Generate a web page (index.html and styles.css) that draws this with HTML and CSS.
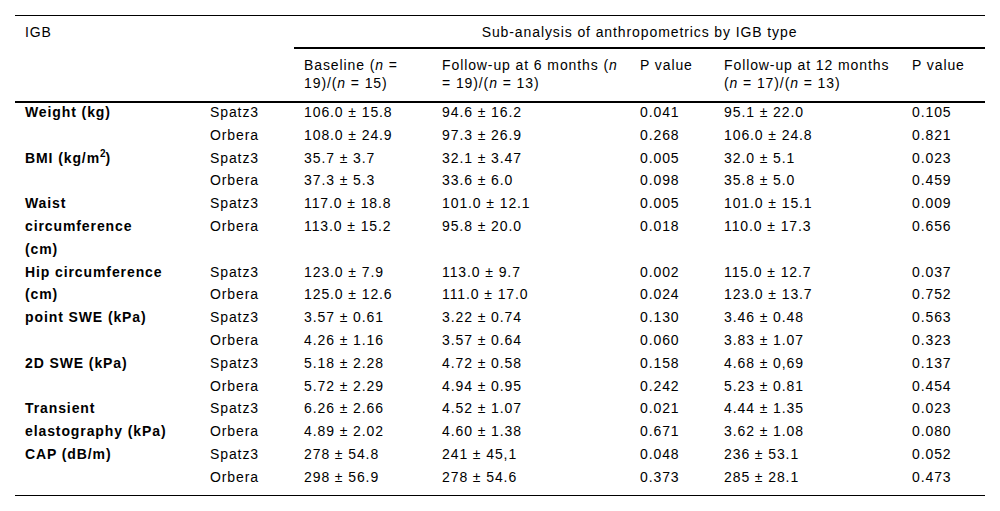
FILE: index.html
```html
<!DOCTYPE html>
<html lang="en">
<head>
<meta charset="utf-8">
<title>Sub-analysis of anthropometrics by IGB type</title>
<link rel="stylesheet" href="styles.css">
</head>
<body>
<table class="data">
  <colgroup>
    <col class="c-label">
    <col class="c-type">
    <col class="c-base">
    <col class="c-f6">
    <col class="c-p">
    <col class="c-f12">
    <col class="c-p2">
  </colgroup>
  <thead>
    <tr class="h1">
      <th colspan="2">IGB</th>
      <th colspan="5" class="sub">Sub-analysis of anthropometrics by IGB type</th>
    </tr>
    <tr class="h2">
      <th colspan="2"></th>
      <th>Baseline (<i>n</i> =<br>19)/(<i>n</i> = 15)</th>
      <th>Follow-up at 6 months (<i>n</i><br>= 19)/(<i>n</i> = 13)</th>
      <th>P value</th>
      <th>Follow-up at 12 months<br>(<i>n</i> = 17)/(<i>n</i> = 13)</th>
      <th>P value</th>
    </tr>
  </thead>
  <tbody>
    <tr><th rowspan="2">Weight (kg)</th><td>Spatz3</td><td>106.0 ± 15.8</td><td>94.6 ± 16.2</td><td>0.041</td><td>95.1 ± 22.0</td><td>0.105</td></tr>
    <tr><td>Orbera</td><td>108.0 ± 24.9</td><td>97.3 ± 26.9</td><td>0.268</td><td>106.0 ± 24.8</td><td>0.821</td></tr>
    <tr><th rowspan="2">BMI (kg/m<sup>2</sup>)</th><td>Spatz3</td><td>35.7 ± 3.7</td><td>32.1 ± 3.47</td><td>0.005</td><td>32.0 ± 5.1</td><td>0.023</td></tr>
    <tr><td>Orbera</td><td>37.3 ± 5.3</td><td>33.6 ± 6.0</td><td>0.098</td><td>35.8 ± 5.0</td><td>0.459</td></tr>
    <tr><th rowspan="3">Waist<br>circumference<br>(cm)</th><td>Spatz3</td><td>117.0 ± 18.8</td><td>101.0 ± 12.1</td><td>0.005</td><td>101.0 ± 15.1</td><td>0.009</td></tr>
    <tr><td>Orbera</td><td>113.0 ± 15.2</td><td>95.8 ± 20.0</td><td>0.018</td><td>110.0 ± 17.3</td><td>0.656</td></tr>
    <tr class="gap"><td></td><td></td><td></td><td></td><td></td><td></td></tr>
    <tr><th rowspan="2">Hip circumference<br>(cm)</th><td>Spatz3</td><td>123.0 ± 7.9</td><td>113.0 ± 9.7</td><td>0.002</td><td>115.0 ± 12.7</td><td>0.037</td></tr>
    <tr><td>Orbera</td><td>125.0 ± 12.6</td><td>111.0 ± 17.0</td><td>0.024</td><td>123.0 ± 13.7</td><td>0.752</td></tr>
    <tr><th rowspan="2">point SWE (kPa)</th><td>Spatz3</td><td>3.57 ± 0.61</td><td>3.22 ± 0.74</td><td>0.130</td><td>3.46 ± 0.48</td><td>0.563</td></tr>
    <tr><td>Orbera</td><td>4.26 ± 1.16</td><td>3.57 ± 0.64</td><td>0.060</td><td>3.83 ± 1.07</td><td>0.323</td></tr>
    <tr><th rowspan="2">2D SWE (kPa)</th><td>Spatz3</td><td>5.18 ± 2.28</td><td>4.72 ± 0.58</td><td>0.158</td><td>4.68 ± 0,69</td><td>0.137</td></tr>
    <tr><td>Orbera</td><td>5.72 ± 2.29</td><td>4.94 ± 0.95</td><td>0.242</td><td>5.23 ± 0.81</td><td>0.454</td></tr>
    <tr><th rowspan="2">Transient<br>elastography (kPa)</th><td>Spatz3</td><td>6.26 ± 2.66</td><td>4.52 ± 1.07</td><td>0.021</td><td>4.44 ± 1.35</td><td>0.023</td></tr>
    <tr><td>Orbera</td><td>4.89 ± 2.02</td><td>4.60 ± 1.38</td><td>0.671</td><td>3.62 ± 1.08</td><td>0.080</td></tr>
    <tr><th rowspan="2">CAP (dB/m)</th><td>Spatz3</td><td>278 ± 54.8</td><td>241 ± 45,1</td><td>0.048</td><td>236 ± 53.1</td><td>0.052</td></tr>
    <tr class="last"><td>Orbera</td><td>298 ± 56.9</td><td>278 ± 54.6</td><td>0.373</td><td>285 ± 28.1</td><td>0.473</td></tr>
  </tbody>
</table>
</body>
</html>
```

FILE: styles.css
```css
html, body {
  background: #ffffff;
}

body {
  margin: 15px;
  font-family: "Liberation Sans", Arial, Helvetica, sans-serif;
  color: #000000;
}

.data {
  width: 970px;
  border-collapse: separate;
  border-spacing: 0;
  table-layout: fixed;
  font-size: 14px;
  letter-spacing: 0.9px;
  border-top: 1px solid #000000;
  border-bottom: 1px solid #000000;
}

.c-label { width: 185px; }
.c-type  { width: 94px; }
.c-base  { width: 138px; }
.c-f6    { width: 198px; }
.c-p     { width: 84px; }
.c-f12   { width: 188px; }
.c-p2    { width: 83px; }

.data th,
.data td {
  text-align: left;
  vertical-align: top;
  padding: 0 10px;
}

.data thead th {
  font-weight: normal;
  line-height: 18px;
}

.data .h1 th {
  padding-top: 7px;
  padding-bottom: 6px;
}

.data .h1 .sub {
  text-align: center;
  border-bottom: 2px solid #000000;
}

.data .h2 th {
  padding-top: 7px;
  padding-bottom: 9px;
  box-shadow: 0 2px 0 #000000;
}

.data tbody th,
.data tbody td {
  line-height: 22.8px;
}

.data tbody th {
  font-weight: bold;
}

.data tbody tr.gap {
  height: 22.8px;
}

.data tbody tr.last td {
  padding-bottom: 6px;
}

.data sup {
  font-size: 10px;
  line-height: 0;
  vertical-align: 6px;
  letter-spacing: 0;
}

.data i {
  font-style: italic;
}
```
